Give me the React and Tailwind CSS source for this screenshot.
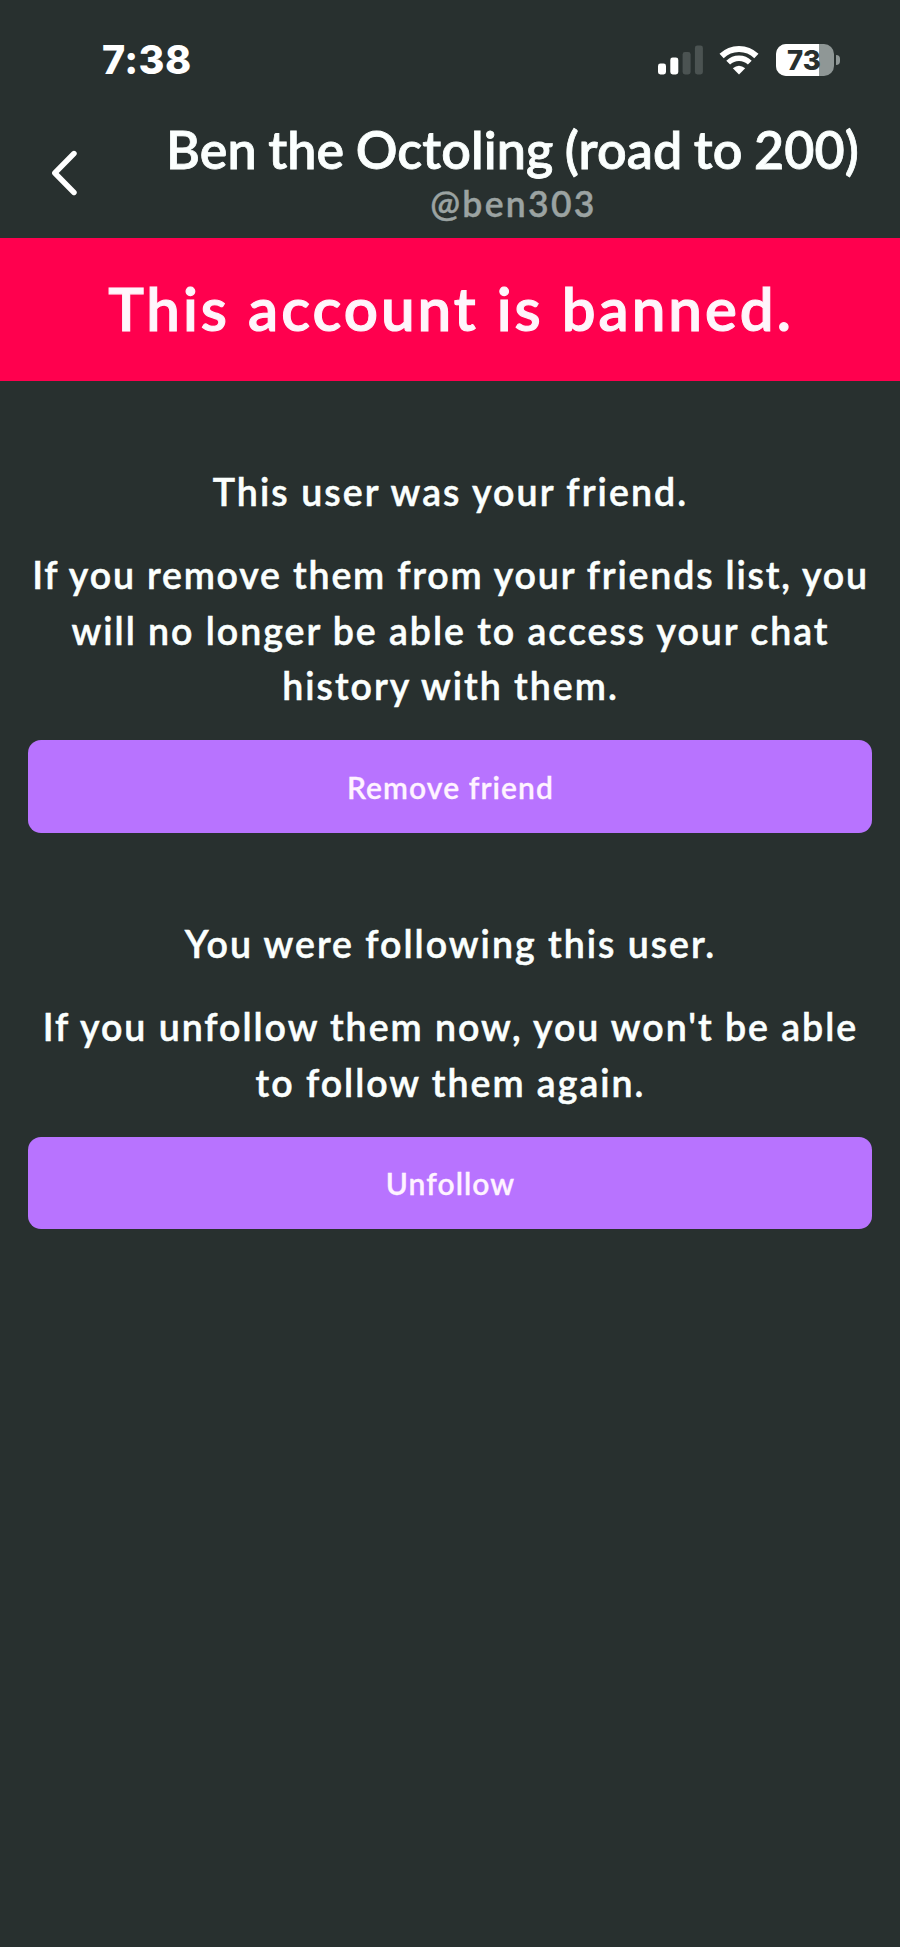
import React from "react";

const sections = [
  {
    title: { text: "This user was your friend.", style: "tracking-[2.08px]" },
    lines: [
      { text: "If you remove them from your friends list, you", style: "tracking-[1.82px]" },
      { text: "will no longer be able to access your chat", style: "tracking-[1.97px]" },
      { text: "history with them.", style: "tracking-[2px]" },
    ],
    button: "Remove friend",
    buttonStyle: "tracking-[1.08px]",
  },
  {
    title: { text: "You were following this user.", style: "tracking-[2px]" },
    lines: [
      { text: "If you unfollow them now, you won't be able", style: "tracking-[1.97px]" },
      { text: "to follow them again.", style: "tracking-[2px]" },
    ],
    button: "Unfollow",
    buttonStyle: "tracking-[1.05px]",
  },
];

function SignalIcon() {
  return (
    <svg width="46" height="30" viewBox="0 0 46 30" fill="#fff">
      <rect x="1" y="18.5" width="8" height="11" rx="2.4" />
      <rect x="13.3" y="12.5" width="8" height="17" rx="2.4" />
      <rect x="25.6" y="7" width="8" height="22.5" rx="2.4" fill="#4b5352" />
      <rect x="37.9" y="0.5" width="8" height="29" rx="2.4" fill="#4b5352" />
    </svg>
  );
}

function WifiIcon() {
  return (
    <svg width="40" height="30" viewBox="0 0 40 30" fill="none" stroke="#fff">
      <path d="M2.6 11 A25 25 0 0 1 37.4 11" strokeWidth="6" />
      <path d="M9.2 17.6 A15.4 15.4 0 0 1 30.8 17.6" strokeWidth="5.4" />
      <path d="M20 29.5 L13.8 23.3 Q20 18.2 26.2 23.3 Z" fill="#fff" stroke="none" />
    </svg>
  );
}

function Battery() {
  return (
    <div className="flex items-center gap-[2px]">
      <div className="relative flex h-8 w-[58px] items-center overflow-hidden rounded-[10px] bg-[#8f9796]">
        <div className="h-full w-[43px] bg-white"></div>
        <span className="absolute inset-0 pr-[2px] text-center text-[27.5px] leading-8 font-extrabold text-[#28302f]">
          73
        </span>
      </div>
      <div className="h-[10px] w-[4px] rounded-r-full bg-[#8f9796]"></div>
    </div>
  );
}

function StatusBar() {
  return (
    <div className="flex h-[120px] items-start justify-between pr-[60px] pl-[102px] font-[Inter,sans-serif] text-white">
      <span className="mt-[36px] text-[39.5px] leading-[48px] font-extrabold tracking-[0.4px]">7:38</span>
      <div className="mt-[44px] flex items-center">
        <SignalIcon />
        <div className="ml-[16px]">
          <WifiIcon />
        </div>
        <div className="ml-[17px]">
          <Battery />
        </div>
      </div>
    </div>
  );
}

function Header() {
  return (
    <div className="flex h-[117.5px] items-start">
      <button className="mt-[30px] ml-[50px] h-[46px] w-[30px]">
        <svg width="30" height="46" viewBox="0 0 30 46" fill="none" stroke="#fff" strokeWidth="5.4">
          <path d="M24 3.5 L4.8 23 L24 42.5" strokeLinecap="round" strokeLinejoin="round" />
        </svg>
      </button>
      <div className="-mt-px ml-[45px] flex w-[776px] flex-col items-center whitespace-nowrap">
        <h1 className="text-[52px] leading-[60px] font-semibold tracking-[0.09px] [word-spacing:-1.6px] [-webkit-text-stroke:0.8px_currentColor]">
          Ben the Octoling (road to 200)
        </h1>
        <p className="pl-[2px] text-[35.5px] leading-[50px] font-semibold tracking-[2.3px] text-[#9ba3a2] [-webkit-text-stroke:0.4px_currentColor]">
          @ben303
        </p>
      </div>
    </div>
  );
}

function App() {
  return (
    <div className="h-[1947px] w-[900px] overflow-hidden bg-[#28302f] font-[Lato,sans-serif] text-[#fbfffe]">
      <StatusBar />
      <Header />

      <div className="flex h-[143px] items-center justify-center bg-[#ff004e] pb-[3px] pl-[2px] text-[60px] font-semibold whitespace-nowrap text-[#fff5fb]">
        <span className="tracking-[3px] [-webkit-text-stroke:1.1px_currentColor]">This account is banned.</span>
      </div>

      {sections.map((section) => (
        <div key={section.button} className="px-7 pt-[83.5px] text-center text-[37.5px] leading-[55.5px] font-semibold">
          <div className="flex flex-col items-center pl-px whitespace-nowrap [-webkit-text-stroke:0.5px_currentColor]">
            <span className={section.title.style}>{section.title.text}</span>
          </div>
          <div className="mt-[27.5px] flex flex-col items-center pl-px whitespace-nowrap [-webkit-text-stroke:0.5px_currentColor]">
            {section.lines.map((line) => (
              <span key={line.text} className={line.style}>
                {line.text}
              </span>
            ))}
          </div>
          <button className="mt-[26.5px] flex h-[92.5px] w-full items-center justify-center rounded-[13px] bg-[#b873ff] pt-[2px] pl-px text-[30px] text-[#fff3ff] [-webkit-text-stroke:0.3px_currentColor]">
            <span className={section.buttonStyle}>{section.button}</span>
          </button>
        </div>
      ))}
    </div>
  );
}

export default App;
